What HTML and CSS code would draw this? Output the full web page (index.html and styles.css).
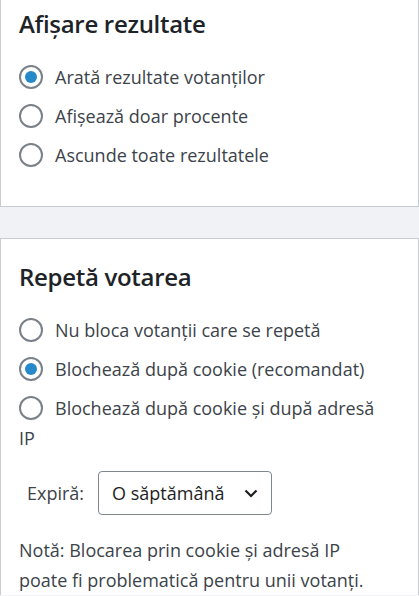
FILE: index.html
```html
<!DOCTYPE html>
<html lang="ro">
<head>
<meta charset="utf-8">
<title>Setări vot</title>
<link rel="stylesheet" href="styles.css">
</head>
<body>
<section class="panel panel--clipped">
  <h2 class="panel-title">Afișare rezultate</h2>
  <div class="radio-group">
    <label class="radio-option"><span class="radio is-checked"></span>Arată rezultate votanților</label>
    <label class="radio-option"><span class="radio"></span>Afișează doar procente</label>
    <label class="radio-option"><span class="radio"></span>Ascunde toate rezultatele</label>
  </div>
</section>
<section class="panel panel--second">
  <h2 class="panel-title">Repetă votarea</h2>
  <div class="radio-group">
    <label class="radio-option"><span class="radio"></span>Nu bloca votanții care se repetă</label>
    <label class="radio-option"><span class="radio is-checked"></span>Blochează după cookie (recomandat)</label>
    <label class="radio-option"><span class="radio"></span>Blochează după cookie și după adresă IP</label>
  </div>
  <div class="expire-row">
    <span class="expire-label">Expiră:</span>
    <div class="select-box">
      <span class="select-value">O săptămână</span>
      <svg class="chevron" width="16" height="16" viewBox="0 0 16 16" aria-hidden="true"><path d="M2.5 5.5 8 11l5.5-5.5" fill="none" stroke="#1e1e1e" stroke-width="2.2"/></svg>
    </div>
  </div>
  <p class="note">Notă: Blocarea prin cookie și adresă IP poate fi problematică pentru unii votanți.</p>
</section>
</body>
</html>
```
FILE: styles.css
```css
html, body {
  margin: 0;
  padding: 0;
}
body {
  background: #f0f2f5;
  font-family: "Open Sans", "Noto Sans", sans-serif;
  color: #3c434a;
}
.panel {
  background: #fff;
  border: 1px solid #c8ccd1;
  padding: 22px 28px 36px 18px;
}
.panel--clipped {
  border-top: 0;
  padding-top: 8px;
}
.panel--second {
  margin-top: 31px;
  border-bottom: 0;
  padding-bottom: 0;
}
.panel-title {
  margin: 0 0 22px 0;
  font-size: 24px;
  line-height: 32px;
  font-weight: 600;
  letter-spacing: -0.3px;
  color: #1d2327;
}
.radio-group {
  display: flex;
  flex-direction: column;
  gap: 9px;
}
.radio-option {
  display: block;
  font-size: 18px;
  line-height: 30px;
  color: #3c434a;
}
.radio {
  display: inline-block;
  box-sizing: border-box;
  width: 24px;
  height: 24px;
  border: 2px solid #7b8189;
  border-radius: 50%;
  vertical-align: top;
  margin: 3px 12px 0 0;
  position: relative;
}
.radio.is-checked::after {
  content: "";
  position: absolute;
  left: 4px;
  top: 4px;
  width: 12px;
  height: 12px;
  border-radius: 50%;
  background: #2689c9;
}
.expire-row {
  display: flex;
  align-items: center;
  gap: 14px;
  margin-top: 18px;
  padding-left: 8px;
}
.expire-label {
  font-size: 18px;
  color: #3c434a;
}
.select-box {
  display: flex;
  align-items: center;
  justify-content: space-between;
  box-sizing: border-box;
  width: 174px;
  height: 44px;
  padding: 0 12px 0 13px;
  border: 1px solid #80868d;
  border-radius: 4px;
}
.select-value {
  font-size: 18px;
  color: #1e1e1e;
}
.chevron {
  flex: none;
}
.note {
  margin: 20px 0 0 0;
  font-size: 18px;
  line-height: 30px;
  color: #3c434a;
}
```
